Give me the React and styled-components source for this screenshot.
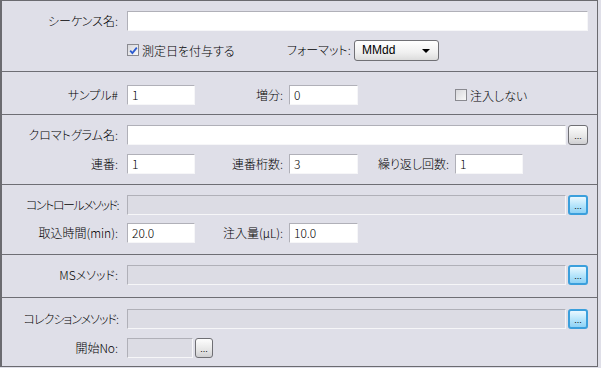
import React from "react";
import styled, { createGlobalStyle, css } from "styled-components";

const GlobalStyle = createGlobalStyle`
  html, body {
    margin: 0;
    padding: 0;
    background: #dfdfe8;
  }
  body {
    font-family: "Noto Sans CJK JP", "Noto Sans", sans-serif;
    font-size: 12px;
    font-weight: 300;
    color: #000;
    font-feature-settings: "palt";
  }
`;

const Panel = styled.div`
  width: 595px;
  height: 365px;
  border-style: solid;
  border-color: #6b6b70;
  border-width: 1px 1px 1px 2px;
  background: #dfdfe8;
  display: flex;
  flex-direction: column;
`;

const Section = styled.div`
  box-sizing: border-box;
  height: ${(p) => p.$h}px;
  padding-top: ${(p) => p.$top}px;
  display: flex;
  flex-direction: column;
  gap: ${(p) => p.$gap ?? 9}px;
  & + & {
    border-top: 1px solid #6e6e74;
  }
`;

const Row = styled.div`
  display: flex;
  align-items: center;
  height: 20px;
  padding-right: 9px;
`;

const Label = styled.div`
  flex-shrink: 0;
  width: ${(p) => p.$w}px;
  margin-right: ${(p) => p.$mr ?? 9}px;
  letter-spacing: ${(p) => p.$ls ?? 0}px;
  text-align: right;
  white-space: nowrap;
  line-height: 20px;
`;

const Field = styled.div`
  box-sizing: border-box;
  height: 20px;
  ${(p) =>
    p.$w
      ? css`
          width: ${p.$w}px;
          flex-shrink: 0;
        `
      : css`
          flex: 1;
        `}
  border: 1px solid;
  border-color: #b0b0b8 #f6f6f8 #f6f6f8 #b0b0b8;
  background: ${(p) => (p.$disabled ? "#dcdce4" : "#fff")};
  padding-left: 4px;
  line-height: 18px;
  white-space: nowrap;
`;

const DotsButton = styled.div`
  box-sizing: border-box;
  flex-shrink: 0;
  width: ${(p) => p.$w ?? 20}px;
  height: ${(p) => p.$h ?? 20}px;
  margin-left: 2px;
  border-radius: 3px;
  display: flex;
  align-items: center;
  justify-content: center;
  font-family: "Liberation Sans", sans-serif;
  font-size: 9px;
  line-height: 1;
  padding-top: 3px;
  ${(p) =>
    p.$blue
      ? css`
          border: 2px solid #3b9fdc;
          background: linear-gradient(#eaf8ff, #b4e4fb 55%, #8fd2f5);
        `
      : css`
          border: 1px solid #6f6f74;
          background: linear-gradient(#fdfdfd, #e6e6e6 60%, #cfcfd2);
        `}
`;

const Select = styled.div`
  box-sizing: border-box;
  width: 85px;
  height: 21px;
  border: 1px solid #707075;
  border-radius: 3px;
  background: linear-gradient(#ffffff, #f0f0f0 60%, #dcdcdc);
  display: flex;
  align-items: center;
  justify-content: space-between;
  padding: 0 8px 0 7px;
  font-family: "Liberation Sans", sans-serif;
  font-size: 12px;
`;

const Arrow = styled.span`
  width: 0;
  height: 0;
  border-left: 4px solid transparent;
  border-right: 4px solid transparent;
  border-top: 4px solid #000;
  margin-top: 1px;
`;

const CheckItem = styled.div`
  display: flex;
  align-items: center;
  gap: 3px;
  flex-shrink: 0;
  width: ${(p) => (p.$w ? `${p.$w}px` : "auto")};
  margin-left: ${(p) => p.$ml ?? 0}px;
  white-space: nowrap;
`;

const Box = styled.span`
  box-sizing: border-box;
  width: 12px;
  height: 12px;
  border: 1px solid #8a8a90;
  background: linear-gradient(135deg, #d8d8dc, #f8f8f8);
  display: flex;
  align-items: center;
  justify-content: center;
`;

function CheckBox({ checked, children, ...rest }) {
  return (
    <CheckItem {...rest}>
      <Box>
        {checked && (
          <svg width="9" height="9" viewBox="0 0 9 9">
            <path d="M1.2 4.6 L3.4 7 L7.8 1.6" fill="none" stroke="#2c5bd0" strokeWidth="1.8" />
          </svg>
        )}
      </Box>
      {children}
    </CheckItem>
  );
}

export default function App() {
  return (
    <>
      <GlobalStyle />
      <Panel>
        <Section $h={70} $top={10}>
          <Row>
            <Label $w={116}>シーケンス名:</Label>
            <Field />
          </Row>
          <Row>
            <Label $w={116} />
            <CheckBox checked $w={160}>
              測定日を付与する
            </CheckBox>
            <Label $w={60} $mr={7}>
              フォーマット:
            </Label>
            <Select>
              MMdd
              <Arrow />
            </Select>
          </Row>
        </Section>

        <Section $h={43} $top={13}>
          <Row>
            <Label $w={116}>サンプル#</Label>
            <Field $w={68}>1</Field>
            <Label $w={88} $mr={6}>
              増分:
            </Label>
            <Field $w={69}>0</Field>
            <CheckBox $ml={97}>注入しない</CheckBox>
          </Row>
        </Section>

        <Section $h={70} $top={10}>
          <Row>
            <Label $w={116}>クロマトグラム名:</Label>
            <Field />
            <DotsButton>...</DotsButton>
          </Row>
          <Row>
            <Label $w={116}>連番:</Label>
            <Field $w={68}>1</Field>
            <Label $w={88} $mr={6}>
              連番桁数:
            </Label>
            <Field $w={69}>3</Field>
            <Label $w={91} $mr={6}>
              繰り返し回数:
            </Label>
            <Field $w={68}>1</Field>
          </Row>
        </Section>

        <Section $h={70} $top={10} $gap={8}>
          <Row>
            <Label $w={116} $ls={-1.5}>
              コントロールメソッド:
            </Label>
            <Field $disabled />
            <DotsButton $blue>...</DotsButton>
          </Row>
          <Row>
            <Label $w={116}>取込時間(min):</Label>
            <Field $w={68}>20.0</Field>
            <Label $w={88} $mr={6}>
              注入量(μL):
            </Label>
            <Field $w={69}>10.0</Field>
          </Row>
        </Section>

        <Section $h={43} $top={10}>
          <Row>
            <Label $w={116}>MSメソッド:</Label>
            <Field $disabled />
            <DotsButton $blue>...</DotsButton>
          </Row>
        </Section>

        <Section $h={69} $top={11}>
          <Row>
            <Label $w={116} $ls={-1}>
              コレクションメソッド:
            </Label>
            <Field $disabled />
            <DotsButton $blue>...</DotsButton>
          </Row>
          <Row>
            <Label $w={116}>開始No:</Label>
            <Field $w={66} $disabled />
            <DotsButton $w={18}>...</DotsButton>
          </Row>
        </Section>
      </Panel>
    </>
  );
}
